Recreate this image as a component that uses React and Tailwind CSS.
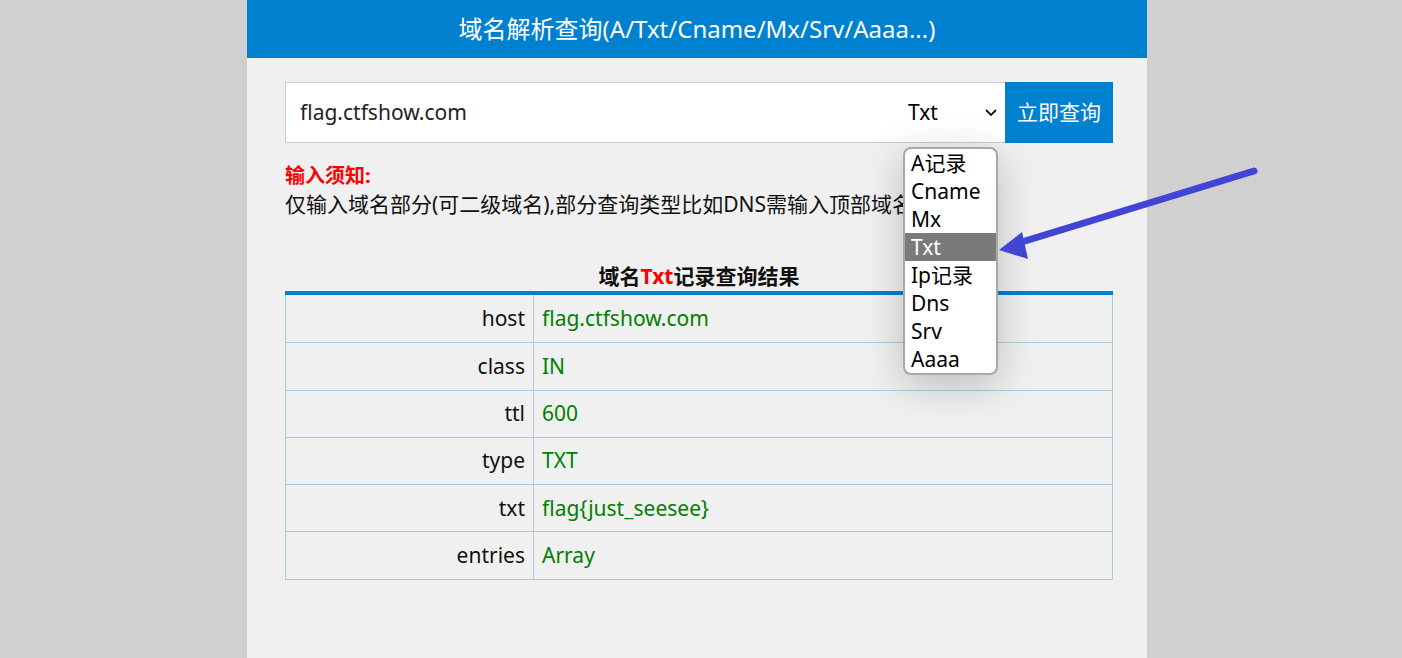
export default function App() {
  const rows = [
    ["host", "flag.ctfshow.com"],
    ["class", "IN"],
    ["ttl", "600"],
    ["type", "TXT"],
    ["txt", "flag{just_seesee}"],
    ["entries", "Array"],
  ];
  const options = ["A记录", "Cname", "Mx", "Txt", "Ip记录", "Dns", "Srv", "Aaaa"];

  return (
    <div
      className="relative w-[1402px] h-[658px] overflow-hidden bg-[#d0d0d0] flex pl-[247px]"
      style={{ fontFamily: '"Noto Sans", "Noto Sans CJK SC", sans-serif' }}
    >
      <div className="w-[900px] h-full bg-[#f0f0f0] flex flex-col">
        <div className="h-[58px] bg-[#0081d0] flex items-center justify-center text-white text-[24px]">
          域名解析查询(A/Txt/Cname/Mx/Srv/Aaaa...)
        </div>

        <div className="pl-[38px] pr-[34px] pt-[24px] flex flex-col">
          <div className="flex h-[61px]">
            <div className="flex-1 flex items-center bg-white border border-[#cccccc] border-r-0">
              <span className="pl-[14px] text-[21px] text-[#222] flex-1">flag.ctfshow.com</span>
              <span className="text-[21px] text-black w-[76px]">Txt</span>
              <svg width="14" height="10" viewBox="0 0 14 10" className="mr-[7px]">
                <path d="M2 2 L7 7 L12 2" fill="none" stroke="#111" strokeWidth="1.8" />
              </svg>
            </div>
            <button className="w-[108px] bg-[#0081d0] text-white text-[21px]">立即查询</button>
          </div>

          <div className="mt-[18px] leading-[29px]">
            <div className="text-[20px] text-[#ff0000] font-bold">输入须知:</div>
            <div className="text-[21px] text-[#111] whitespace-nowrap">
              仅输入域名部分(可二级域名),部分查询类型比如DNS需输入顶部域名
            </div>
          </div>

          <div className="mt-[43px] text-center text-[21px] font-bold text-[#111] leading-[28px]">
            域名<span className="text-[#ff0000]">Txt</span>记录查询结果
          </div>
          <div className="mt-[1px] border-t-4 border-[#0081d0]">
            <div className="border border-t-0 border-[#a9cbd9]">
              {rows.map(([k, v], i) => (
                <div
                  key={k}
                  className={`flex h-[47.3px] text-[21px] ${i > 0 ? "border-t border-[#a9cbd9]" : ""}`}
                >
                  <div className="w-[248px] border-r border-[#a9cbd9] flex items-center justify-end pr-[8px] text-[#111]">
                    {k}
                  </div>
                  <div className="flex-1 flex items-center pl-[8px] text-[#008000]">{v}</div>
                </div>
              ))}
            </div>
          </div>
        </div>
      </div>

      <div className="absolute left-[903px] top-[147px] w-[95px] bg-white border-2 border-[#a8a8a8] rounded-[8px] shadow-[0_10px_40px_rgba(0,0,0,0.22)] overflow-hidden">
        {options.map((o) => (
          <div
            key={o}
            className={`h-[28px] leading-[28px] pl-[6px] text-[21px] ${o === "Txt" ? "bg-[#7a7a7a] text-white" : "text-black"}`}
          >
            {o}
          </div>
        ))}
      </div>

      <svg className="absolute left-0 top-0 pointer-events-none" width="1402" height="658">
        <line x1="1254" y1="171" x2="1025" y2="241" stroke="#4046d3" strokeWidth="7" strokeLinecap="round" />
        <polygon points="999,250 1022,232 1028,259" fill="#4046d3" />
      </svg>
    </div>
  );
}
